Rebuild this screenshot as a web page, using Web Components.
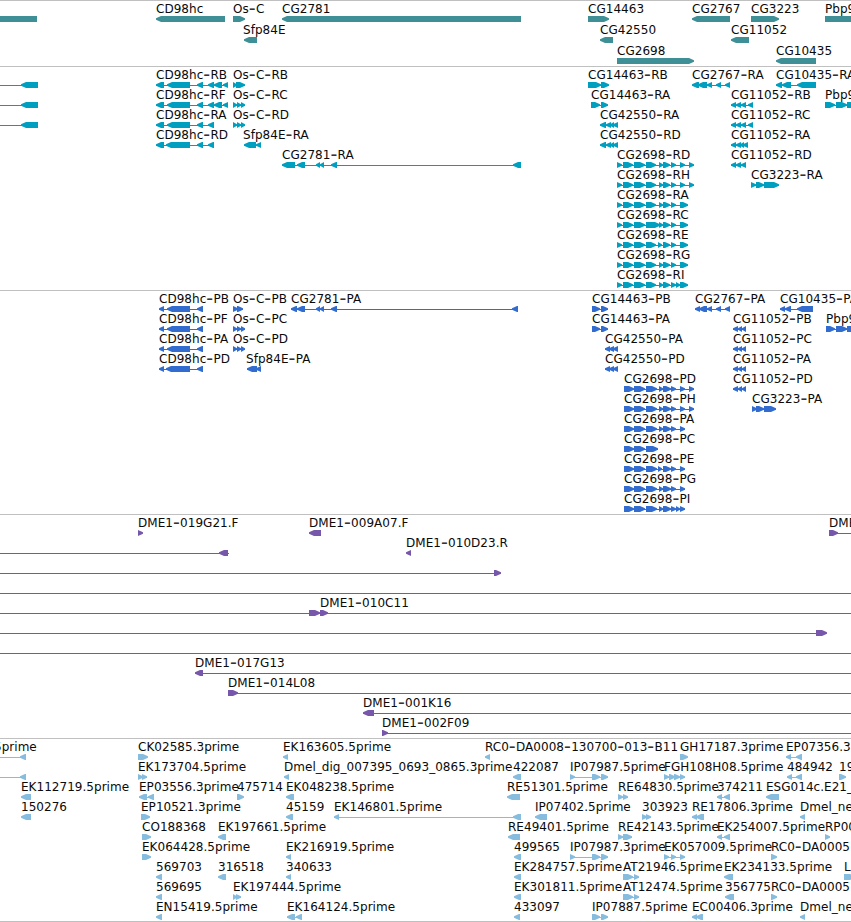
<!DOCTYPE html>
<html lang="en">
<head>
<meta charset="utf-8">
<title>Genome tracks</title>
<style>
  body {
    margin: 0;
    background: #fff;
    overflow: hidden;
    font: 12px "DejaVu Sans", sans-serif;
  }
</style>
</head>
<body>
<genome-view>
  <genome-track style="--feature: #3f8f96" row-height="21" pad="2">
         < -20:37; CD98hc < 156:225; Os-C > 233:245; CG2781 < 282:521; CG14463 > 588:609; CG2767 < 692:730; CG3223 > 751:779; Pbp95 > 825:870
         Sfp84E@243 < 244:257; CG42550 < 600:613; CG11052 < 731:749
         CG2698 > 617:694; CG10435 < 776:816
  </genome-track>

  <genome-track style="--feature: #009fc0">
    < 21:38 ~-9:30; CD98hc-RB < 156:164 167:190 197:203 208:214 214:222 223:228; Os-C-RB > 233:237 236:245; CG14463-RB > 588:601 601:609; CG2767-RA < 692:699 698:707 707:712 716:721 725:730; CG10435-RA < 776:782 782:791 797:816
    < 21:38 ~-9:30; CD98hc-RF < 156:164 167:190 197:203 208:214 214:222 223:228; Os-C-RC > 233:237 237:241 241:245; CG14463-RA > 591:600 601:608; CG11052-RB < 731:736 736:741 741:746 748:753; Pbp95-RB > 825:835 836:847 847:860
    < 21:38 ~-9:30; CD98hc-RA < 156:164 167:190 197:203 208:214; Os-C-RD > 233:237 237:241 241:245; CG42550-RA < 600:606 606:611 610:614 613:618; CG11052-RC < 731:736 736:741 741:746 748:753
    CD98hc-RD < 156:164 166:190 197:203 208:214; Sfp84E-RA@243 < 244:256 256:261; CG42550-RD < 600:606 606:611 610:614 613:618; CG11052-RA < 731:736 736:741 740:744 743:748
    CG2781-RA < 282:295 297:305 316:320 320:324 331:337 513:521; CG2698-RD > 617:622 623:633 634:645 646:656 659:663 663:670 671:676 680:685 689:694; CG11052-RD < 731:736 736:741 741:746
    CG2698-RH > 617:622 623:633 634:645 646:656 659:663 663:670 671:676 680:685 689:694; CG3223-RA > 751:756 756:764 764:779
    CG2698-RA > 617:622 623:633 634:645 646:656 659:663 663:670 671:676 680:688
    CG2698-RC > 617:622 623:633 634:645 646:660 659:663 663:670 671:676 680:688
    CG2698-RE > 617:622 623:633 634:645 646:656 658:662 663:670 671:676 680:688
    CG2698-RG > 617:622 623:633 634:645 646:656 659:663 663:670 671:676 680:688
    CG2698-RI > 617:622 623:633 634:645 646:656 659:663 663:670 671:676 676:680 680:688
  </genome-track>

  <genome-track style="--feature: #326ccf">
    CD98hc-PB < 159:164 167:190 197:203; Os-C-PB > 233:238 237:243; CG2781-PA < 291:297 297:305 316:320 320:324 331:337 512:518; CG14463-PB > 592:600 601:608; CG2767-PA < 695:700 699:707 707:712 716:721 725:730; CG10435-PA < 780:785 785:791 797:813
    CD98hc-PF < 159:164 167:190 197:203; Os-C-PC > 233:237 237:241 241:245; CG14463-PA > 592:600 601:608; CG11052-PB < 733:738 738:742 742:746; Pbp95-PB > 826:835 836:847 847:860
    CD98hc-PA < 159:164 167:190 197:203; Os-C-PD > 233:237 237:241 241:245; CG42550-PA < 605:610 609:614 613:618; CG11052-PC < 733:738 738:742 742:746
    CD98hc-PD < 159:164 166:190 197:203; Sfp84E-PA@246 < 247:257 256:261; CG42550-PD < 605:610 609:614 613:618; CG11052-PA < 733:738 738:742 742:746
    CG2698-PD > 624:634 634:645 646:657 659:663 663:671 671:676 680:685 689:694; CG11052-PD < 733:738 738:742 742:746
    CG2698-PH > 624:634 634:645 646:657 659:663 663:671 671:676 680:685 689:694; CG3223-PA > 752:757 756:764 764:776
    CG2698-PA > 624:634 634:645 646:657 659:663 663:671 671:676 680:685
    CG2698-PC > 624:634 634:645 646:658
    CG2698-PE > 624:634 634:645 646:657 658:662 663:671 671:676 680:685
    CG2698-PG > 624:634 634:645 646:657 659:663 663:671 671:676 680:685
    CG2698-PI > 624:634 634:645 646:657 659:663 663:671 671:676 676:680 680:685
  </genome-track>

  <genome-track style="--feature: #7757aa">
    DME1-019G21.F > 138:143; DME1-009A07.F < 309:321; DME1- > 829:838 ~829:860
    < 219:228 ~-9:229; DME1-010D23.R < 406:411
    > 494:501 ~-9:501
    > ~-9:860
    > 309:320 ~-9:320; DME1-010C11 > 320:328 ~320:860
    > 816:827 ~-9:820
    > ~-9:860
    DME1-017G13 < 195:203 ~195:860
    DME1-014L08 > 228:238 ~228:860
    DME1-001K16 < 363:374 ~363:860
    DME1-002F09 > 382:388 ~382:860
  </genome-track>

  <genome-track style="--feature: #86bcde" pad="2">
    5prime@-6 < 20:26 ~-9:26; CK02585.3prime > 138:148; EK163605.5prime < 283:288; RC0-DA0008-130700-013-B11 < 485:490; GH17187.3prime > 680:688; EP07356.3prime < 786:791 796:802
    < 20:26 ~-9:26; EK173704.5prime > 138:143 142:147; Dmel_dig_007395_0693_0865.3prime < 284:289; 422087 < 513:521; IP07987.5prime > 570:575 592:600 601:608; FGH108H08.5prime > 664:669 669:675 674:680 680:685; 484942 < 787:792 796:802; 19 > 839:846
    EK112719.5prime < 21:31; EP03556.3prime < 139:147 148:154; 475714 > 237:244; EK048238.5prime < 286:294; RE51301.5prime < 507:520; RE64830.5prime > 618:623 623:628; 374211 < 717:722 724:730; ESG014c.E21_ < 766:779
    150276 < 21:31; EP10521.3prime > 141:150; 45159 < 286:293; EK146801.5prime < 334:339 513:521; IP07402.5prime < 535:547; 303923 > 642:647 646:651; RE17806.3prime < 692:697 696:704; Dmel_ne < 800:805
    CO188368 > 142:151; EK197661.5prime < 218:226; RE49401.5prime < 508:520; RE42143.5prime > 618:623 623:632; EK254007.5prime < 717:722 724:730; RP00 > 825:830
    EK064428.5prime > 142:151; EK216919.5prime < 286:291; 499565 < 514:521; IP07987.3prime > 570:575 592:600 601:608; EK057009.5prime > 664:669 671:676 680:685; RC0-DA0005 > 771:777
    569703 < 156:162; 316518 < 218:226; 340633 < 286:291; EK284757.5prime < 514:521; AT21946.5prime > 623:633 634:639; EK234133.5prime < 724:733; L > 844:855
    569695 < 156:162; EK197444.5prime > 233:237 236:241; EK301811.5prime < 514:521; AT12474.5prime > 623:633 634:639; 356775 < 725:734; RC0-DA0005 > 771:777
    EN15419.5prime < 156:162; EK164124.5prime < 287:295 296:302; 433097 < 514:520; IP07887.5prime > 592:600 601:608; EC00406.3prime < 692:697 696:703; Dmel_ne < 800:805
  </genome-track>
</genome-view>

<script>
class GenomeView extends HTMLElement {
  connectedCallback() {
    this.attachShadow({ mode: 'open' });
    this.shadowRoot.innerHTML = `
      <style>
        :host {
          display: flex;
          flex-direction: column;
          width: 851px;
          height: 922px;
        }
        .end {
          height: 1px;
          background: #c0c0c0;
        }
      </style>
      <slot></slot>
      <div class="end"></div>
    `;
  }
}

// One line per row, features split by ";":
//   name < 10:20 30:40 ~5:60   (strand, exons, optional span of the intron line)
class GenomeTrack extends HTMLElement {
  connectedCallback() {
    const rowHeight = this.getAttribute('row-height') || 20;
    const pad = this.getAttribute('pad') || 3;
    const rows = this.textContent.trim().split('\n').map(r => r.trim());
    this.attachShadow({ mode: 'open' });
    this.shadowRoot.innerHTML = `
      <style>
        :host {
          display: block;
          flex: none;
          border-top: 1px solid #c0c0c0;
          padding-bottom: ${pad}px;
        }
      </style>
      ${rows.map(() => `<track-row style="height: ${rowHeight}px"></track-row>`).join('')}
    `;
    this.shadowRoot.querySelectorAll('track-row').forEach((el, i) => {
      el.features = rows[i].split(';').map(parseFeature);
    });
  }
}

function parseFeature(text) {
  const [, label, strand, rest] = text.trim().match(/^(.*?)\s*([<>])\s*(.*)$/);
  const exons = [];
  let line = null;
  for (const part of rest.split(' ')) {
    const range = part.replace('~', '').split(':').map(Number);
    if (part[0] === '~') line = range;
    else exons.push(range);
  }
  if (!line && exons.length > 1) line = [exons[0][0], exons[exons.length - 1][1]];
  const [name, at] = label.split('@');
  return { name, strand, exons, line, x: at ? Number(at) : (exons[0] || line)[0] };
}

class TrackRow extends HTMLElement {
  constructor() {
    super();
    this.attachShadow({ mode: 'open' });
  }

  set features(list) {
    this.shadowRoot.innerHTML = `
      <style>
        :host { display: block; }
        svg { display: block; width: 100%; height: 100%; overflow: visible; }
        text { font-size: 12px; letter-spacing: 0.03px; fill: #0a0a0a; white-space: pre; }
        .dash { font-size: 19px; letter-spacing: 0.3px; fill: #333; }
        rect, polygon { fill: var(--feature); }
      </style>
      <svg>${list.map(f => this.glyph(f)).join('')}</svg>
    `;
  }

  glyph(f) {
    let out = '';
    if (f.line) {
      out += `<rect x="${f.line[0]}" y="18" width="${f.line[1] - f.line[0]}" height="1"/>`;
    }
    for (const [a, b] of f.exons) out += `<polygon points="${this.arrow(a, b, f.strand)}"/>`;
    if (f.name) {
      // long dashes sit lower than the enlarged glyph would, the next part goes back up
      const name = f.name.split('-')
        .map((part, i) => i ? `<tspan class="dash" dy="2">-</tspan><tspan dy="-2">${part}</tspan>` : part)
        .join('');
      out += `<text x="${f.x}" y="12">${name}</text>`;
    }
    return out;
  }

  arrow(a, b, strand) {
    const head = Math.min(5, b - a);
    return strand === '<'
      ? `${b},15 ${a + head},15 ${a},17.2 ${a},18.8 ${a + head},21 ${b},21`
      : `${a},15 ${b - head},15 ${b},17.2 ${b},18.8 ${b - head},21 ${a},21`;
  }
}

customElements.define('track-row', TrackRow);
customElements.define('genome-track', GenomeTrack);
customElements.define('genome-view', GenomeView);
</script>
</body>
</html>
